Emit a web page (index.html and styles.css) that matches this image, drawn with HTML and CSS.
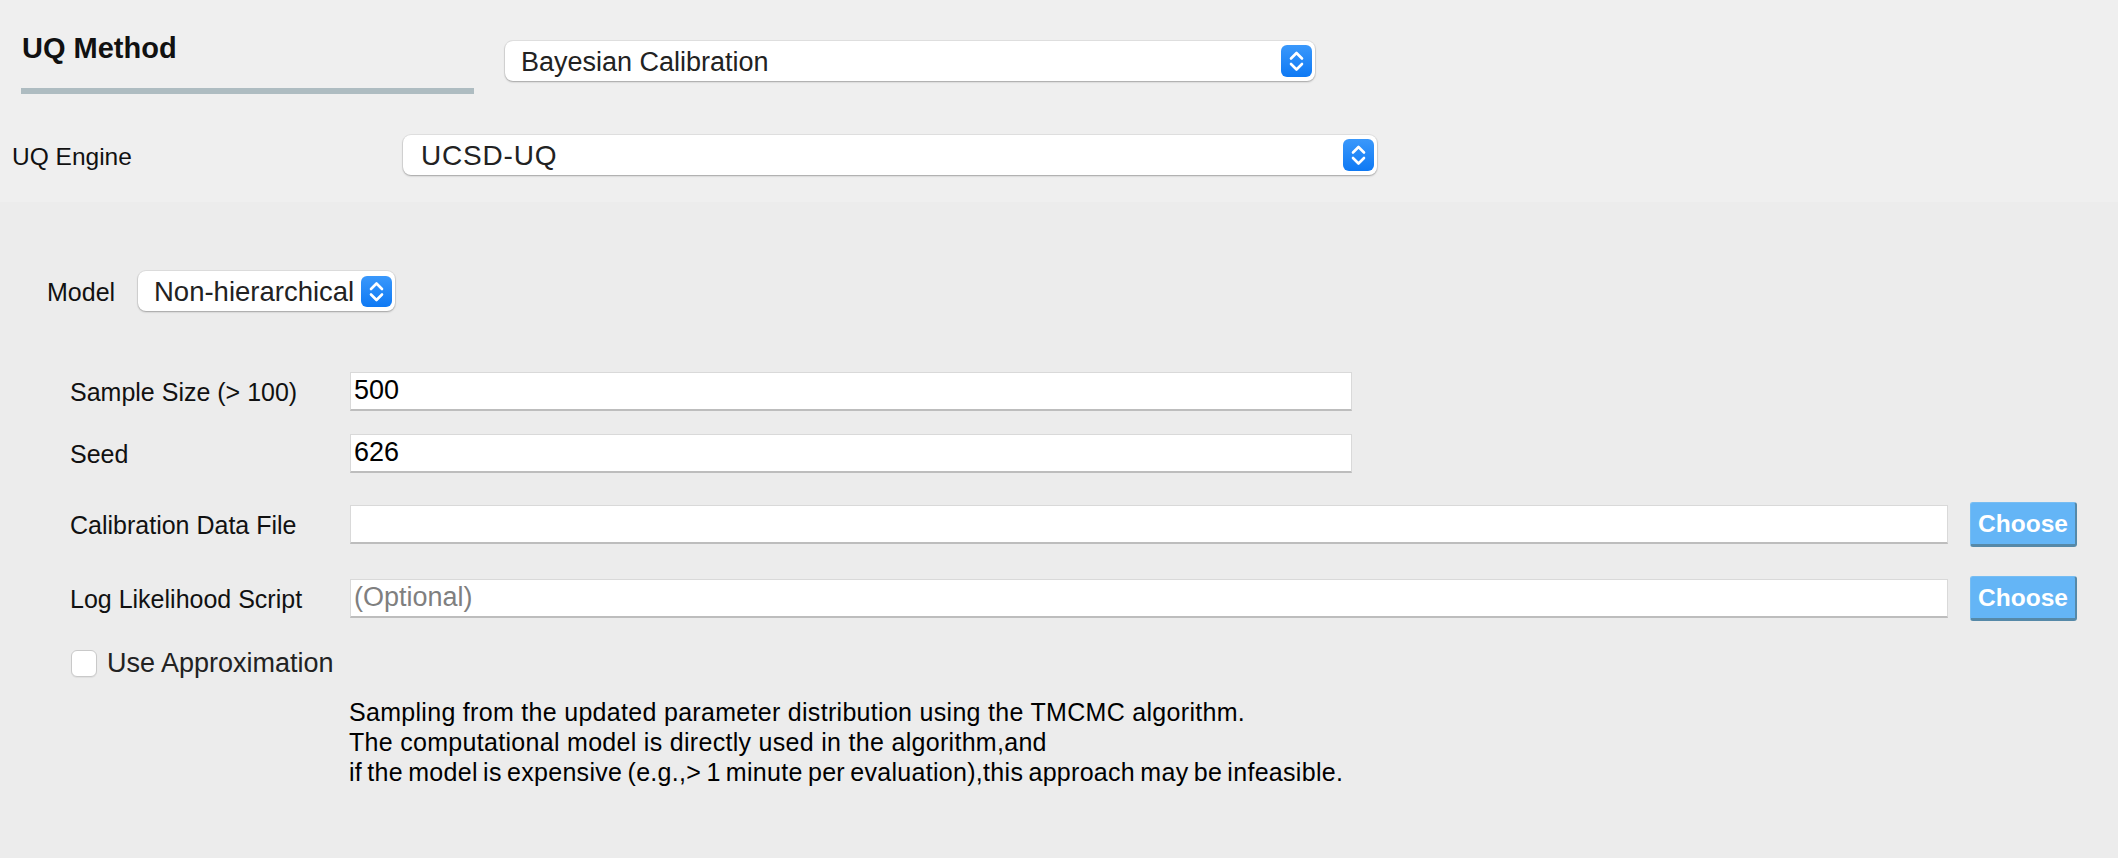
FILE: index.html
```html
<!DOCTYPE html>
<html>
<head>
<meta charset="utf-8">
<title>UQ Method</title>
<link rel="stylesheet" href="styles.css">
</head>
<body>
<div class="top">
  <div class="method-row">
    <div class="method-title">
      <div class="title-text">UQ Method</div>
      <div class="title-bar"></div>
    </div>
    <div class="select select-method">
      <span class="select-text">Bayesian Calibration</span>
      <span class="select-arrow"><svg viewBox="0 0 31 32" width="31" height="32"><path d="M10 13.5 L15.5 8 L21 13.5 M10 19 L15.5 24.5 L21 19" fill="none" stroke="#fff" stroke-width="2.6" stroke-linecap="round" stroke-linejoin="round"/></svg></span>
    </div>
  </div>
  <div class="engine-row">
    <div class="engine-label">UQ Engine</div>
    <div class="select select-engine">
      <span class="select-text">UCSD-UQ</span>
      <span class="select-arrow"><svg viewBox="0 0 31 32" width="31" height="32"><path d="M10 13.5 L15.5 8 L21 13.5 M10 19 L15.5 24.5 L21 19" fill="none" stroke="#fff" stroke-width="2.6" stroke-linecap="round" stroke-linejoin="round"/></svg></span>
    </div>
  </div>
</div>

<div class="panel">
  <div class="model-row">
    <div class="model-label">Model</div>
    <div class="select select-model">
      <span class="select-text">Non-hierarchical</span>
      <span class="select-arrow small"><svg viewBox="0 0 31 31" width="31" height="31"><path d="M10 13 L15.5 7.5 L21 13 M10 18.5 L15.5 24 L21 18.5" fill="none" stroke="#fff" stroke-width="2.6" stroke-linecap="round" stroke-linejoin="round"/></svg></span>
    </div>
  </div>

  <div class="form">
    <div class="form-row row-short">
      <div class="form-label">Sample Size (&gt; 100)</div>
      <div class="input input-short">500</div>
    </div>
    <div class="form-row row-short row-seed">
      <div class="form-label">Seed</div>
      <div class="input input-short">626</div>
    </div>
    <div class="form-row row-file">
      <div class="form-label">Calibration Data File</div>
      <div class="input input-long"></div>
      <button class="choose">Choose</button>
    </div>
    <div class="form-row row-file">
      <div class="form-label">Log Likelihood Script</div>
      <div class="input input-long placeholder">(Optional)</div>
      <button class="choose">Choose</button>
    </div>
    <div class="check-row">
      <span class="checkbox"></span>
      <span class="check-text">Use Approximation</span>
    </div>
    <div class="description">
      <div>Sampling from the updated parameter distribution using the TMCMC algorithm.</div>
      <div>The computational model is directly used in the algorithm,and</div>
      <div class="desc-tight">if the model is expensive (e.g.,&gt; 1 minute per evaluation),this approach may be infeasible.</div>
    </div>
  </div>
</div>
</body>
</html>
```
FILE: styles.css
```css
* { box-sizing: border-box; }
html, body {
  margin: 0;
  padding: 0;
}
body {
  width: 2118px;
  height: 858px;
  overflow: hidden;
  font-family: "Liberation Sans", Arial, sans-serif;
  color: #111;
  background: #ececec;
}

.top {
  height: 202px;
  background: #efefef;
}

.method-row {
  display: flex;
  align-items: flex-start;
  height: 135px;
}
.method-title {
  margin-left: 21px;
  width: 453px;
  padding-top: 33px;
}
.title-text {
  font-size: 29px;
  line-height: 30px;
  font-weight: bold;
  color: #111;
  padding-left: 1px;
}
.title-bar {
  margin-top: 25px;
  height: 6px;
  background: #aebcc1;
}

.select {
  display: flex;
  align-items: center;
  height: 40px;
  background: #fff;
  border-radius: 8px;
  box-shadow: 0 0 0 1px rgba(0, 0, 0, 0.06), 0 1px 2px rgba(0, 0, 0, 0.28);
  padding-left: 16px;
  padding-right: 3px;
}
.select-text {
  flex: 1;
  font-size: 27px;
  line-height: 30px;
  color: #222;
  white-space: nowrap;
  overflow: hidden;
  padding-top: 1px;
}
.select-arrow {
  width: 31px;
  height: 32px;
  border-radius: 6px;
  background: linear-gradient(#3a98fb, #0e79f4);
  display: flex;
  flex: none;
}
.select-arrow.small { height: 31px; }

.select-method {
  margin-left: 31px;
  margin-top: 41px;
  width: 810px;
}

.engine-row {
  display: flex;
  align-items: center;
  height: 40px;
}
.engine-label {
  margin-left: 12px;
  width: 391px;
  font-size: 24.5px;
  padding-top: 3px;
}
.select-engine {
  width: 974px;
  padding-left: 18px;
}
.select-engine .select-text {
  font-size: 28px;
  letter-spacing: 0.8px;
}

.panel {
  padding-top: 69px;
}
.model-row {
  display: flex;
  align-items: center;
  height: 40px;
}
.model-label {
  margin-left: 47px;
  width: 91px;
  font-size: 25px;
  padding-top: 2px;
}
.select-model {
  width: 257px;
  padding-left: 16px;
}
.select-model .select-text {
  font-size: 27.5px;
}

.form {
  margin-top: 61px;
  padding-left: 70px;
}
.form-row {
  display: flex;
  align-items: center;
}
.form-label {
  width: 280px;
  font-size: 25px;
  color: #111;
  padding-top: 1px;
}
.row-short { height: 39px; }
.row-seed { margin-top: 23px; }
.row-file { height: 45px; margin-top: 29px; }

.input {
  height: 39px;
  background: #fff;
  border: 1px solid #d9d9d9;
  border-bottom: 2px solid #bdbdbd;
  font-size: 27px;
  line-height: 35px;
  padding-left: 3px;
  color: #000;
  white-space: nowrap;
}
.input-short { width: 1002px; }
.input-long { width: 1598px; }
.placeholder { color: #7f7f7f; }

.choose {
  margin-left: 22px;
  width: 107px;
  height: 45px;
  padding: 0;
  background: #64b5f6;
  border: 1px solid #76bdf3;
  border-right: 2px solid #5689a8;
  border-bottom: 3px solid #5689a8;
  border-radius: 3px;
  color: #fff;
  font-family: "Liberation Sans", Arial, sans-serif;
  font-weight: bold;
  font-size: 24.5px;
  line-height: 38px;
}

.check-row {
  display: flex;
  align-items: center;
  margin-top: 29px;
  height: 27px;
  padding-left: 1px;
}
.checkbox {
  width: 26px;
  height: 27px;
  background: #fff;
  border: 1px solid #c9c9c9;
  border-radius: 6px;
  box-shadow: 0 1px 1px rgba(0, 0, 0, 0.06);
}
.check-text {
  margin-left: 10px;
  font-size: 27px;
  color: #222;
}

.description {
  margin-top: 20px;
  margin-left: 279px;
  font-size: 25px;
  line-height: 30px;
  color: #000;
  letter-spacing: 0.3px;
}
.desc-tight {
  word-spacing: -2px;
}
```
